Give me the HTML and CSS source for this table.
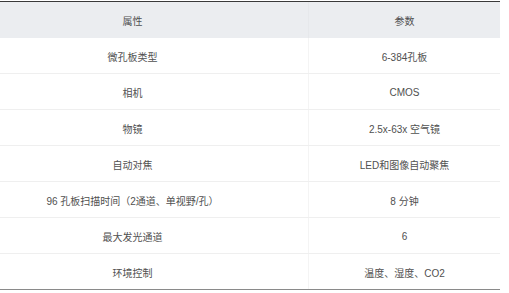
FILE: index.html
```html
<!DOCTYPE html>
<html lang="zh-CN">
<head>
<meta charset="utf-8">
<link rel="stylesheet" href="styles.css">
</head>
<body>
<div class="spec-table">
  <div class="row head"><div class="cell">属性</div><div class="cell right">参数</div></div>
  <div class="row"><div class="cell">微孔板类型</div><div class="cell right">6-384孔板</div></div>
  <div class="row"><div class="cell">相机</div><div class="cell right">CMOS</div></div>
  <div class="row"><div class="cell">物镜</div><div class="cell right">2.5x-63x 空气镜</div></div>
  <div class="row"><div class="cell">自动对焦</div><div class="cell right">LED和图像自动聚焦</div></div>
  <div class="row"><div class="cell">96 孔板扫描时间（2通道、单视野/孔）</div><div class="cell right">8 分钟</div></div>
  <div class="row"><div class="cell">最大发光通道</div><div class="cell right">6</div></div>
  <div class="row last"><div class="cell">环境控制</div><div class="cell right">温度、湿度、CO2</div></div>
</div>
</body>
</html>
```
FILE: styles.css
```css
html, body {
  margin: 0;
  padding: 0;
  background: #ffffff;
}
body {
  padding-top: 1px;
  font-family: "Liberation Sans", "Noto Sans CJK SC", sans-serif;
  font-size: 10px;
  color: #505050;
}
.spec-table {
  margin-left: -43px;
  width: 543px;
  border-top: 1px solid #3a3a3a;
}
.row {
  display: grid;
  grid-template-columns: 351px 192px;
  height: 36px;
  box-sizing: border-box;
  border-bottom: 1px solid #efefef;
}
.row.head {
  background: #ebedf0;
  border-bottom: none;
}
.row.last {
  border-bottom: 1px solid #8a8a8a;
}
.cell {
  display: flex;
  align-items: center;
  justify-content: center;
  white-space: nowrap;
  padding-top: 1px;
}
.cell.right {
  border-left: 1px solid #f4f4f4;
}
.row.head .cell.right {
  border-left-color: #e6e8eb;
}
```
